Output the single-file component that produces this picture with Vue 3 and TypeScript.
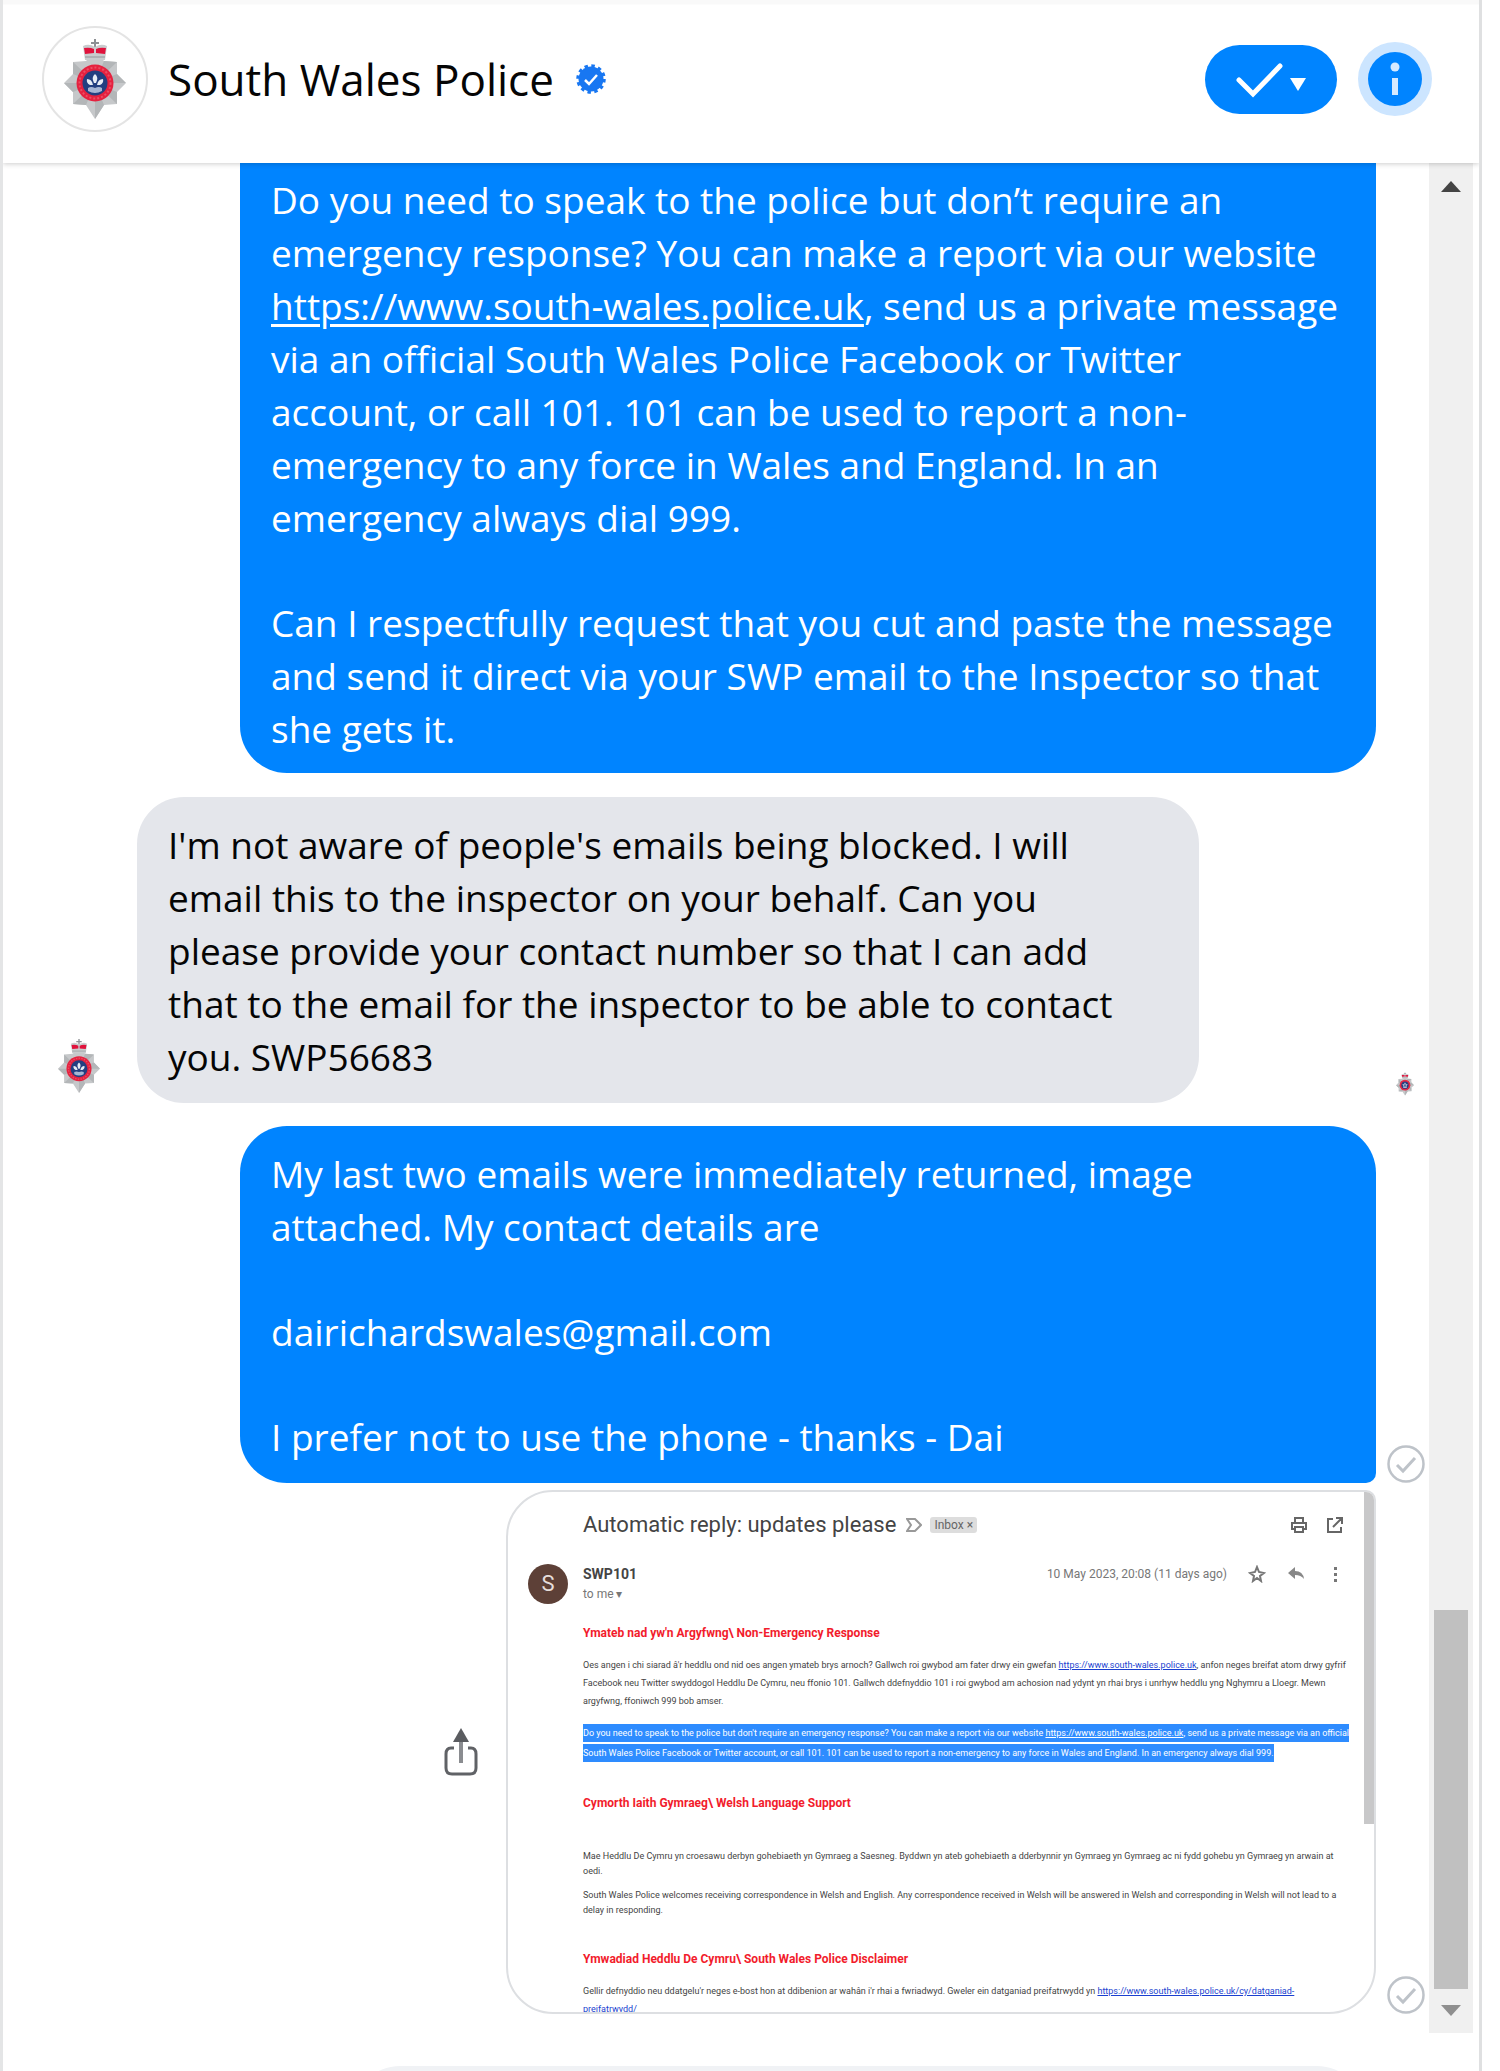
<script setup lang="ts">
interface BodyBlock {
  kind: 'heading' | 'notice' | 'selected' | 'compact'
  lines: { text: string; link?: string; after?: string }[]
}

const sent: string[] = [
  'My last two emails were immediately returned, image attached. My contact details are',
  'dairichardswales@gmail.com',
  'I prefer not to use the phone - thanks - Dai',
]

const mail: BodyBlock[] = [
  { kind: 'heading', lines: [{ text: "Ymateb nad yw'n Argyfwng\\ Non-Emergency Response" }] },
  {
    kind: 'notice',
    lines: [
      {
        text: "Oes angen i chi siarad â'r heddlu ond nid oes angen ymateb brys arnoch? Gallwch roi gwybod am fater drwy ein gwefan ",
        link: 'https://www.south-wales.police.uk',
        after: ', anfon neges breifat atom drwy gyfrif',
      },
      {
        text: 'Facebook neu Twitter swyddogol Heddlu De Cymru, neu ffonio 101. Gallwch ddefnyddio 101 i roi gwybod am achosion nad ydynt yn rhai brys i unrhyw heddlu yng Nghymru a Lloegr. Mewn',
      },
      { text: 'argyfwng, ffoniwch 999 bob amser.' },
    ],
  },
  {
    kind: 'selected',
    lines: [
      {
        text: "Do you need to speak to the police but don't require an emergency response? You can make a report via our website ",
        link: 'https://www.south-wales.police.uk',
        after: ', send us a private message via an official',
      },
      {
        text: 'South Wales Police Facebook or Twitter account, or call 101. 101 can be used to report a non-emergency to any force in Wales and England. In an emergency always dial 999.',
      },
    ],
  },
  { kind: 'heading', lines: [{ text: 'Cymorth Iaith Gymraeg\\ Welsh Language Support' }] },
  {
    kind: 'compact',
    lines: [
      {
        text: 'Mae Heddlu De Cymru yn croesawu derbyn gohebiaeth yn Gymraeg a Saesneg. Byddwn yn ateb gohebiaeth a dderbynnir yn Gymraeg yn Gymraeg ac ni fydd gohebu yn Gymraeg yn arwain at',
      },
      { text: 'oedi.' },
    ],
  },
  {
    kind: 'compact',
    lines: [
      {
        text: 'South Wales Police welcomes receiving correspondence in Welsh and English. Any correspondence received in Welsh will be answered in Welsh and corresponding in Welsh will not lead to a',
      },
      { text: 'delay in responding.' },
    ],
  },
  { kind: 'heading', lines: [{ text: 'Ymwadiad Heddlu De Cymru\\ South Wales Police Disclaimer' }] },
  {
    kind: 'notice',
    lines: [
      {
        text: "Gellir defnyddio neu ddatgelu'r neges e-bost hon at ddibenion ar wahân i'r rhai a fwriadwyd. Gweler ein datganiad preifatrwydd yn ",
        link: 'https://www.south-wales.police.uk/cy/datganiad-',
      },
      { text: '', link: 'preifatrwydd/' },
    ],
  },
]
</script>

<template>
  <svg class="defs" aria-hidden="true">
    <symbol id="crest" viewBox="0 0 62 80">
      <path
        d="M31 12 40 22 53 23 53 35 62 44 53 53 53 65 40 66 31 80 22 66 9 65 9 53 0 44 9 35 9 23 22 22Z"
        fill="#c6c8ca"
      />
      <path d="M31 44 31 80 40 66ZM31 44 53 65 53 53ZM31 44 62 44 53 35ZM31 44 53 23 40 22ZM31 44 9 65 22 66ZM31 44 0 44 9 53ZM31 44 9 23 9 35Z" fill="#b3b6b8" />
      <path d="M30 0h2v3h3v2h-3v4h-2V5h-3V3h3Z" fill="#8d9094" />
      <path d="M19 7q6-3 12 1 6-4 12-1l-2 14H21Z" fill="#c9ccce" />
      <path d="M20 9q6-1 10 1v4l-9 1ZM42 9q-6-1-10 1v4l9 1Z" fill="#e0123c" />
      <path d="M21 17h20v2H21Z" fill="#aeb1b4" />
      <circle cx="31" cy="44" r="18.500" fill="#e5213f" />
      <circle cx="31" cy="44" r="15.500" fill="none" stroke="#ea4d63" stroke-width="2" stroke-dasharray="2 2" />
      <circle cx="31" cy="44" r="12.500" fill="#233f80" />
      <path d="M31 35q4 3 1 9h-2q-3-6 1-9ZM23 40q5 0 6 6h-3q-4-2-3-6ZM39 40q-5 0-6 6h3q4-2 3-6Z" fill="#e8edf5" />
      <path d="M24 49q3-2 7 0 4-2 7 0v3q-7 4-14 0Z" fill="#a6b6d4" />
    </symbol>
    <symbol id="delivered" viewBox="0 0 38 38">
      <circle cx="19" cy="19" r="17.500" fill="none" stroke="#bec3c9" stroke-width="2.500" />
      <path d="m10 20 6 6 12-13" fill="none" stroke="#bec3c9" stroke-width="3" />
    </symbol>
  </svg>

  <main class="chat">
    <header class="top">
      <span class="avatar"><svg class="crest-lg"><use href="#crest" /></svg></span>
      <h1>South Wales Police</h1>
      <svg class="verified" viewBox="0 0 30 30" role="img" aria-label="Verified">
        <circle cx="15" cy="15" r="12.500" fill="#1877f2" />
        <circle cx="15" cy="15" r="13" fill="none" stroke="#1877f2" stroke-width="3.500" stroke-dasharray="3.400 3.400" />
        <path d="m9 16 4 4 8-9" fill="none" stroke="#fff" stroke-width="2.500" />
      </svg>
      <div class="actions">
        <button class="done" type="button" aria-label="Mark as done">
          <svg viewBox="0 0 132 69">
            <path d="m34 35 14 14 27-28" fill="none" stroke="#fff" stroke-width="5" stroke-linecap="round" />
            <path d="M85 33h16l-8 13Z" fill="#fff" />
          </svg>
        </button>
        <button class="info" type="button" aria-label="Conversation information">
          <svg viewBox="0 0 74 74">
            <circle cx="37" cy="37" r="37" fill="#cce5ff" />
            <circle cx="37" cy="37" r="27" fill="#0084ff" />
            <circle cx="37" cy="25" r="4.500" fill="#d6eaff" />
            <path d="M34 36h6v17h-6Z" fill="#d6eaff" />
          </svg>
        </button>
      </div>
    </header>

    <div class="body">
      <section class="messages" aria-label="Messages">
        <div class="row out">
          <div class="bubble blue cut">
            <p>
              Do you need to speak to the police but don’t require an<br />
              emergency response? You can make a report via our website<br />
              <a href="https://www.south-wales.police.uk">https://www.south-wales.police.uk</a>, send us a private message<br />
              via an official South Wales Police Facebook or Twitter<br />
              account, or call 101. 101 can be used to report a non-<br />
              emergency to any force in Wales and England. In an<br />
              emergency always dial 999.
            </p>
            <p>
              Can I respectfully request that you cut and paste the message<br />
              and send it direct via your SWP email to the Inspector so that<br />
              she gets it.
            </p>
          </div>
          <span class="state"></span>
        </div>

        <div class="row in">
          <span class="sender"><svg class="crest-md"><use href="#crest" /></svg></span>
          <div class="bubble grey">
            <p>
              I'm not aware of people's emails being blocked. I will<br />
              email this to the inspector on your behalf. Can you<br />
              please provide your contact number so that I can add<br />
              that to the email for the inspector to be able to contact<br />
              you. SWP56683
            </p>
          </div>
          <span class="seen"><svg class="crest-sm"><use href="#crest" /></svg></span>
        </div>

        <div class="row out">
          <div class="bubble blue joined">
            <p v-for="line in sent" :key="line">{{ line }}</p>
          </div>
          <span class="state"><svg><use href="#delivered" /></svg></span>
        </div>

        <div class="row out attachment">
          <button class="share" type="button" aria-label="Share">
            <svg viewBox="0 0 34 48">
              <path d="M10 20H7q-5 0-5 6v14q0 6 6 6h18q6 0 6-6V26q0-6-5-6h-3" fill="none" stroke="#606266" stroke-width="3" />
              <path d="M17 12v23" stroke="#8a8c90" stroke-width="4" />
              <path d="m17 0 8 14H9Z" fill="#5a5c60" />
            </svg>
          </button>
          <article class="mail">
            <div class="subject">
              <h2>Automatic reply: updates please</h2>
              <svg class="tag" viewBox="0 0 16 14"><path d="M1 1h8l6 6-6 6H1l4-6Z" fill="none" stroke="#999" stroke-width="2" /></svg>
              <span class="chip">Inbox ×</span>
              <svg class="glyph push" viewBox="0 0 18 18">
                <path d="M5 6V2h8v4M5 13H2V7h14v6h-3M5 11h8v5H5Z" fill="none" stroke="#666" stroke-width="2" />
              </svg>
              <svg class="glyph" viewBox="0 0 18 18">
                <path d="M7 3H2v13h13v-5M10 2h6v6M16 2 7 11" fill="none" stroke="#666" stroke-width="2" />
              </svg>
            </div>
            <div class="from">
              <span class="initial">S</span>
              <div class="who">
                <strong>SWP101</strong>
                <small>to me ▾</small>
              </div>
              <div class="meta">
                <time>10 May 2023, 20:08 (11 days ago)</time>
                <svg class="glyph" viewBox="0 0 18 18">
                  <path d="m9 2 2 5 5 1-4 3 1 5-4-3-4 3 1-5-4-3 5-1Z" fill="none" stroke="#777" stroke-width="2" />
                </svg>
                <svg class="glyph" viewBox="0 0 18 18"><path d="M8 2v4q8 0 9 8-3-4-9-4v4L1 8Z" fill="#888" /></svg>
                <svg class="glyph" viewBox="0 0 18 18"><path d="M8 2h3v3H8ZM8 8h3v3H8ZM8 14h3v3H8Z" fill="#777" /></svg>
              </div>
            </div>
            <div class="text">
              <div v-for="(block, i) in mail" :key="i" :class="['block', block.kind]">
                <p v-for="(line, j) in block.lines" :key="j">
                  <span>{{ line.text }}<a v-if="line.link" :href="line.link">{{ line.link }}</a>{{ line.after }}</span>
                </p>
              </div>
            </div>
            <span class="mail-thumb"></span>
          </article>
          <span class="state"><svg><use href="#delivered" /></svg></span>
        </div>
      </section>

      <div class="scrollbar" aria-hidden="true">
        <svg viewBox="0 0 44 44"><path d="M12 29h20L22 18Z" fill="#444" /></svg>
        <span class="thumb"></span>
        <svg viewBox="0 0 44 44"><path d="M12 16h20L22 27Z" fill="#8f8f8f" /></svg>
      </div>
    </div>

    <footer class="composer"><div class="field"></div></footer>
  </main>
</template>

<style>
body {
  margin: 0;
  background: #fff;
}
</style>

<style scoped>
* {
  box-sizing: border-box;
}
svg {
  display: block;
}
h1,
h2,
p {
  margin: 0;
  font-weight: 400;
}
button {
  padding: 0;
  border: 0;
  background: none;
}
.defs {
  display: none;
}
.chat {
  display: flex;
  flex-direction: column;
  height: 100vh;
  margin-right: 18px;
  border-left: 3px solid #e4e5e6;
  border-right: 3px solid #dfe0e1;
  overflow: hidden;
  font-family: "Open Sans", "Noto Sans", sans-serif;
}
.top {
  display: flex;
  flex: none;
  align-items: center;
  height: 163px;
  padding: 0 47px 5px 39px;
  background: linear-gradient(#f9f9f9 4px, #fff 5px);
  box-shadow: 0 1px 5px rgba(0, 0, 0, 0.2);
  z-index: 1;
}
.avatar {
  display: grid;
  place-items: center;
  width: 106px;
  height: 106px;
  border: 2px solid #e4e4e4;
  border-radius: 50%;
}
.crest-lg {
  width: 62px;
  height: 80px;
}
h1 {
  margin-left: 20px;
  font-size: 44px;
  line-height: 52px;
  font-weight: 500;
  color: #050505;
}
.verified {
  width: 30px;
  height: 30px;
  margin-left: 22px;
}
.actions {
  display: flex;
  align-items: center;
  gap: 21px;
  margin-left: auto;
}
.done {
  width: 132px;
  height: 69px;
  border-radius: 35px;
  background: #0084ff;
}
.info {
  width: 74px;
  height: 74px;
}
.body {
  display: flex;
  flex: 1;
  min-height: 0;
  padding-right: 6px;
}
.messages {
  flex: 1;
  min-width: 0;
  overflow: hidden;
}
.row {
  display: flex;
  align-items: flex-end;
}
.row.out {
  padding-left: 237px;
}
.bubble {
  flex: 1;
  padding: 21px 24px 20px 31px;
  border-radius: 47px;
  font-size: 37px;
  line-height: 53px;
}
.bubble p + p {
  margin-top: 52px;
}
.blue {
  background: #0084ff;
  color: #fff;
}
.blue a {
  color: inherit;
  text-underline-offset: 4px;
}
.cut {
  padding-top: 10px;
  padding-bottom: 18px;
  border-radius: 0 0 47px 47px;
}
.grey {
  background: #e4e6eb;
  color: #050505;
}
.joined {
  border-bottom-right-radius: 10px;
}
.row.in {
  margin: 24px 0 23px;
}
.sender {
  display: flex;
  flex: none;
  justify-content: flex-end;
  width: 134px;
  padding: 0 37px 9px 0;
}
.crest-md {
  width: 42px;
  height: 56px;
}
.seen {
  display: flex;
  flex: none;
  justify-content: flex-end;
  width: 230px;
  padding: 0 15px 7px 0;
}
.crest-sm {
  width: 18px;
  height: 24px;
}
.state {
  flex: none;
  width: 53px;
  padding-left: 11px;
}
.state svg {
  width: 38px;
  height: 38px;
}
.attachment {
  justify-content: flex-end;
  margin-top: 7px;
}
.share {
  align-self: center;
  width: 34px;
  height: 48px;
  margin-right: 28px;
}
.mail {
  position: relative;
  width: 870px;
  height: 524px;
  overflow: hidden;
  border: 2px solid #dddfe2;
  border-radius: 47px 10px 47px 47px;
  font-family: Roboto, "Liberation Sans", sans-serif;
  color: #444;
}
.subject {
  display: flex;
  align-items: center;
  height: 28px;
  margin: 19px 30px 0 75px;
}
h2 {
  font-size: 22px;
  line-height: 28px;
  white-space: nowrap;
}
.tag {
  width: 16px;
  height: 14px;
  margin: 0 8px 0 10px;
}
.chip {
  padding: 0 4px;
  border-radius: 3px;
  background: #ddd;
  color: #666;
  font-size: 12px;
  line-height: 16px;
}
.glyph {
  width: 18px;
  height: 18px;
}
.subject .glyph {
  margin-left: 18px;
}
.subject .push {
  margin-left: auto;
}
.from {
  display: flex;
  height: 40px;
  margin: 25px 30px 0 20px;
}
.initial {
  width: 40px;
  margin-right: 15px;
  border-radius: 50%;
  background: #5d4037;
  color: #e6dedb;
  font-size: 22px;
  line-height: 40px;
  text-align: center;
}
.who {
  display: flex;
  flex-direction: column;
  font-size: 14px;
  line-height: 20px;
}
.who small {
  color: #777;
  font-size: 12px;
}
.meta {
  display: flex;
  align-items: center;
  gap: 21px;
  height: 20px;
  margin-left: auto;
  color: #777;
  font-size: 12px;
}
.text {
  margin-left: 75px;
}
.block {
  font-size: 9px;
  line-height: 18px;
  white-space: nowrap;
}
.block a {
  color: #1a3fd0;
}
.heading {
  margin-top: 31px;
  color: #f21c2c;
  font-size: 12px;
  line-height: 20px;
}
.heading p {
  font-weight: 700;
}
.heading:first-child {
  margin-top: 19px;
}
.heading + .block {
  margin-top: 13px;
}
.notice + .selected {
  margin-top: 14px;
}
.selected {
  color: #fff;
}
.selected a {
  color: #fff;
}
.selected p + p {
  margin-top: 2px;
}
.selected span {
  display: inline-block;
  background: #2e8cff;
}
.compact {
  margin-top: 9px;
  line-height: 15px;
}
.heading + .compact {
  margin-top: 36px;
}
.mail-thumb {
  position: absolute;
  top: -2px;
  right: -2px;
  width: 12px;
  height: 334px;
  background: #c8c8c9;
}
.scrollbar {
  display: flex;
  flex: none;
  flex-direction: column;
  width: 44px;
  background: #f0f0f0;
}
.scrollbar svg {
  width: 44px;
  height: 44px;
}
.thumb {
  height: 379px;
  margin: auto 5px 0;
  background: #c0c0c0;
}
.composer {
  flex: none;
  height: 38px;
  padding: 33px 115px 0 350px;
  overflow: hidden;
}
.field {
  height: 95px;
  border-radius: 47px;
  background: #f0f2f5;
}
</style>
